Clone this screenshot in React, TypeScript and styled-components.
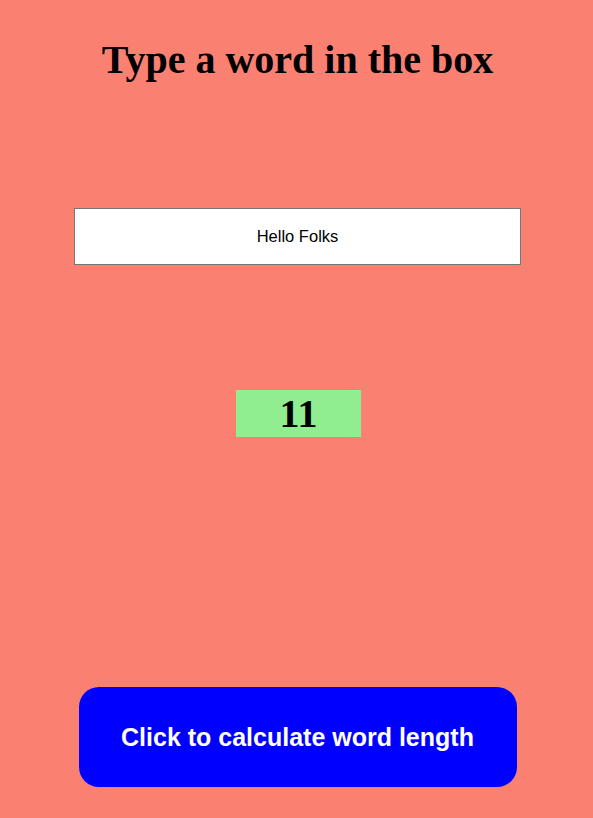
import styled, { createGlobalStyle } from "styled-components";
import { useState } from "react";

const GlobalStyle = createGlobalStyle`
  html, body {
    margin: 0;
    padding: 0;
    background: #fa8072;
  }
`;

function App() {
  const [word, setWord] = useState("Hello Folks");
  const [length, setLength] = useState(11);

  return (
    <Page>
      <GlobalStyle />
      <Title>Type a word in the box</Title>
      <WordInput value={word} onChange={(e) => setWord(e.target.value)} />
      <Result>{length}</Result>
      <CalcButton onClick={() => setLength(word.length)}>
        Click to calculate word length
      </CalcButton>
    </Page>
  );
}
export default App;

const Page = styled.div`
  display: flex;
  flex-direction: column;
  align-items: center;
  padding: 37px 0 0 2px;
  min-height: 818px;
  box-sizing: border-box;
`;

const Title = styled.h1`
  margin: 0;
  font-family: "Liberation Serif", "Times New Roman", serif;
  font-weight: bold;
  font-size: 40px;
  line-height: 46px;
  color: #000;
`;

const WordInput = styled.input`
  margin-top: 125px;
  width: 447px;
  height: 57px;
  box-sizing: border-box;
  border: 1px solid #767676;
  background: #fff;
  text-align: center;
  font-family: "Liberation Sans", Arial, sans-serif;
  font-size: 16.5px;
  color: #000;
  outline: none;
`;

const Result = styled.h1`
  margin: 125px 0 0 2px;
  width: 125px;
  height: 47px;
  background: #90ee90;
  display: flex;
  align-items: center;
  justify-content: center;
  font-family: "Liberation Serif", "Times New Roman", serif;
  font-weight: bold;
  font-size: 40px;
  color: #000;
`;

const CalcButton = styled.button`
  margin-top: 250px;
  width: 438px;
  height: 100px;
  border: none;
  border-radius: 20px;
  background: #0000ff;
  color: #fff;
  font-family: "Liberation Sans", Arial, sans-serif;
  font-weight: bold;
  font-size: 25px;
  cursor: pointer;
`;
